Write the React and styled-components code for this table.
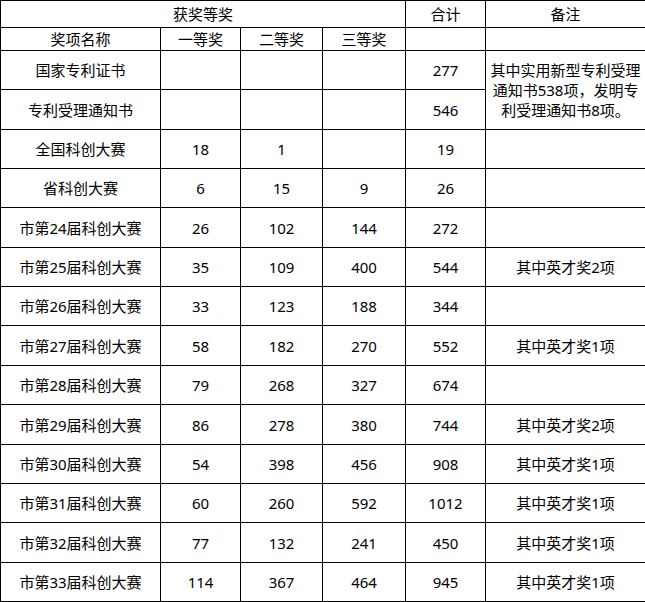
import styled, { createGlobalStyle } from "styled-components";

const GlobalStyle = createGlobalStyle`
  html, body {
    margin: 0;
    padding: 0;
    background: #fff;
  }
  body {
    font-family: "Noto Sans", "Noto Sans CJK SC", sans-serif;
    color: #000;
  }
`;

const Table = styled.table`
  border-collapse: collapse;
  table-layout: fixed;
  width: 645px;
  font-size: 15px;
  line-height: 20px;
`;

const Cell = styled.td`
  border: 1px solid #000;
  padding: 0 2px;
  text-align: center;
  vertical-align: middle;
  height: ${({ $h }) => $h || 38}px;
  box-sizing: border-box;
  white-space: ${({ $wrap }) => ($wrap ? "normal" : "nowrap")};
  overflow: hidden;
`;

const Row = styled.tr``;

const rows = [
  ["全国科创大赛", "18", "1", "", "19", ""],
  ["省科创大赛", "6", "15", "9", "26", ""],
  ["市第24届科创大赛", "26", "102", "144", "272", ""],
  ["市第25届科创大赛", "35", "109", "400", "544", "其中英才奖2项"],
  ["市第26届科创大赛", "33", "123", "188", "344", ""],
  ["市第27届科创大赛", "58", "182", "270", "552", "其中英才奖1项"],
  ["市第28届科创大赛", "79", "268", "327", "674", ""],
  ["市第29届科创大赛", "86", "278", "380", "744", "其中英才奖2项"],
  ["市第30届科创大赛", "54", "398", "456", "908", "其中英才奖1项"],
  ["市第31届科创大赛", "60", "260", "592", "1012", "其中英才奖1项"],
  ["市第32届科创大赛", "77", "132", "241", "450", "其中英才奖1项"],
  ["市第33届科创大赛", "114", "367", "464", "945", "其中英才奖1项"],
];

// data rows are ~39.36px apart, starting at y=50
const rowHeight = (i) => Math.round(50 + 39.357 * (i + 1)) - Math.round(50 + 39.357 * i);

export default function App() {
  return (
    <>
      <GlobalStyle />
      <Table>
        <colgroup>
          <col style={{ width: 160 }} />
          <col style={{ width: 80 }} />
          <col style={{ width: 82 }} />
          <col style={{ width: 83 }} />
          <col style={{ width: 80 }} />
          <col style={{ width: 160 }} />
        </colgroup>
        <tbody>
          <Row>
            <Cell colSpan={4} $h={27}>获奖等奖</Cell>
            <Cell $h={27}>合计</Cell>
            <Cell $h={27}>备注</Cell>
          </Row>
          <Row>
            <Cell $h={23}>奖项名称</Cell>
            <Cell $h={23}>一等奖</Cell>
            <Cell $h={23}>二等奖</Cell>
            <Cell $h={23}>三等奖</Cell>
            <Cell $h={23}></Cell>
            <Cell $h={23}></Cell>
          </Row>
          <Row>
            <Cell $h={rowHeight(0)}>国家专利证书</Cell>
            <Cell $h={rowHeight(0)}></Cell>
            <Cell $h={rowHeight(0)}></Cell>
            <Cell $h={rowHeight(0)}></Cell>
            <Cell $h={rowHeight(0)}>277</Cell>
            <Cell rowSpan={2} $wrap>
              其中实用新型专利受理通知书538项，发明专利受理通知书8项。
            </Cell>
          </Row>
          <Row>
            <Cell $h={rowHeight(1)}>专利受理通知书</Cell>
            <Cell $h={rowHeight(1)}></Cell>
            <Cell $h={rowHeight(1)}></Cell>
            <Cell $h={rowHeight(1)}></Cell>
            <Cell $h={rowHeight(1)}>546</Cell>
          </Row>
          {rows.map((r, i) => (
            <Row key={r[0]}>
              {r.map((v, j) => (
                <Cell key={j} $h={rowHeight(i + 2)}>
                  {v}
                </Cell>
              ))}
            </Row>
          ))}
        </tbody>
      </Table>
    </>
  );
}
